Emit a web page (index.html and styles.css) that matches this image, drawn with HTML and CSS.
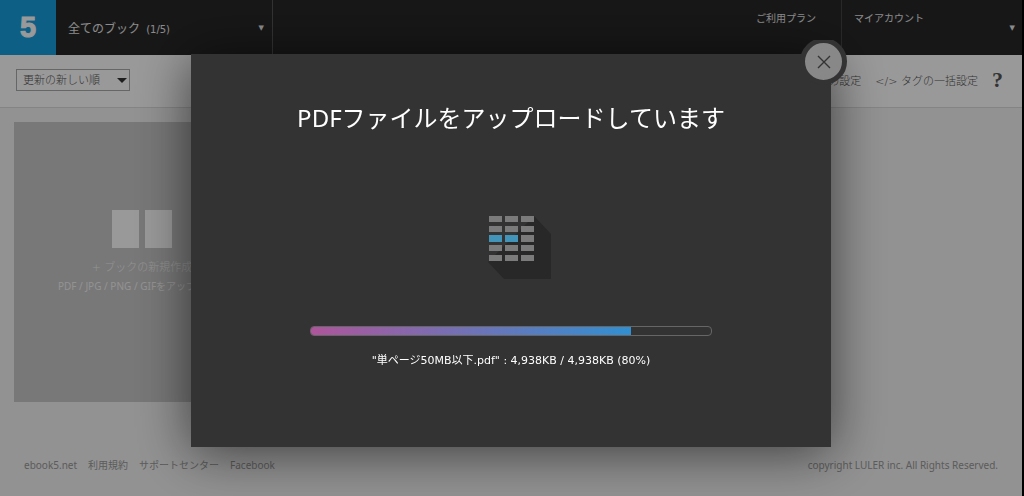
FILE: index.html
```
<!DOCTYPE html>
<html lang="ja">
<head>
    <meta charset="UTF-8" />
    <meta name="viewport" content="width=device-width, initial-scale=1" />
    <title>ebook5</title>
    <link rel="stylesheet" href="styles.css">
</head>
<body>
    <div class="page">
        <header class="header">
            <a class="logo" href="#">5</a>
            <button class="book-menu" type="button">
                <span>全てのブック <small>(1/5)</small></span>
                <span class="arrow">▼</span>
            </button>
            <nav class="account">
                <a class="plan" href="#">ご利用プラン</a>
                <button class="account-menu" type="button">
                    <span>マイアカウント</span>
                    <span class="arrow">▼</span>
                </button>
            </nav>
        </header>

        <div class="toolbar">
            <div class="sort">
                <select aria-label="並び順">
                    <option>更新の新しい順</option>
                    <option>更新の古い順</option>
                </select>
            </div>
            <div class="tools">
                <a href="#">の設定</a>
                <a href="#">&lt;/&gt; タグの一括設定</a>
                <a class="help" href="#">?</a>
            </div>
        </div>

        <main class="books">
            <button class="new-book" type="button">
                <span class="pages"><i></i><i></i></span>
                <span class="new-title">+ ブックの新規作成</span>
                <span class="new-note">PDF / JPG / PNG / GIFをアップロード</span>
            </button>
        </main>

        <footer class="footer">
            <nav class="links">
                <a href="#">ebook5.net</a>
                <a href="#">利用規約</a>
                <a href="#">サポートセンター</a>
                <a href="#">Facebook</a>
            </nav>
            <span>copyright LULER inc. All Rights Reserved.</span>
        </footer>
    </div>

    <div class="overlay">
        <div class="modal" role="dialog" aria-labelledby="modal-title">
            <button class="close" type="button" aria-label="閉じる">
                <svg width="14" height="14" viewBox="0 0 14 14"><path d="M1 1L13 13M13 1L1 13" stroke="#333" stroke-width="1.4"/></svg>
            </button>
            <h1 id="modal-title">PDFファイルをアップロードしています</h1>
            <svg class="loader" width="46" height="64" viewBox="0 0 46 64">
                <path d="M46 0L63 18V63H16L0 46Z" fill="#282828"/>
                <g fill="#7b7b7b">
                    <path d="M1 0h13v6H1zM17 0h13v6H17zM33 0h13v6H33z"/>
                    <path d="M1 10h13v6H1zM17 10h13v6H17zM33 10h13v6H33z"/>
                    <path d="M33 19h13v7H33z"/>
                    <path d="M1 29h13v6H1zM17 29h13v6H17zM33 29h13v6H33z"/>
                    <path d="M1 39h13v6H1zM17 39h13v6H17zM33 39h13v6H33z"/>
                </g>
                <path d="M1 19h13v7H1zM17 19h13v7H17z" fill="#4295b9"/>
            </svg>
            <div class="progress" role="progressbar" aria-label="アップロード" aria-valuenow="80" aria-valuemin="0" aria-valuemax="100">
                <div class="bar" style="width: 80%"></div>
            </div>
            <p class="status">"単ページ50MB以下.pdf" : 4,938KB / 4,938KB (80%)</p>
        </div>
    </div>
</body>
</html>
```

FILE: styles.css
```
* {
    box-sizing: border-box;
}
body {
    margin: 0;
    font-family: "Noto Sans", "Noto Sans CJK JP", sans-serif;
    font-size: 11px;
    background-color: #f3f3f3;
}
a {
    color: inherit;
    text-decoration: none;
}
button {
    font: inherit;
    color: inherit;
    border: none;
    padding: 0;
    background: none;
    cursor: pointer;
}
.page {
    display: flex;
    flex-direction: column;
    min-height: 100vh;
    border-right: 2px solid #000;
}
.header {
    display: flex;
    height: 55px;
    background-color: #272727;
    color: #e8e8e8;
}
.logo {
    width: 56px;
    line-height: 55px;
    background-color: #169fde;
    color: #fff;
    font-family: "Liberation Sans", Arial, sans-serif;
    font-size: 29px;
    font-weight: bold;
    text-align: center;
    -webkit-text-stroke: 1px #fff;
}
.book-menu {
    display: flex;
    justify-content: space-between;
    align-items: center;
    width: 217px;
    padding: 0 8px 0 12px;
    border-right: 1px solid #555;
    font-size: 12px;
}
.book-menu small {
    margin-left: 3px;
    font-family: "DejaVu Sans", sans-serif;
    font-size: 10px;
}
.arrow {
    font-family: "DejaVu Sans", sans-serif;
    font-size: 7px;
}
.account {
    display: flex;
    margin-left: auto;
    font-size: 10px;
    line-height: 16px;
}
.plan {
    width: 85px;
    padding-top: 10px;
}
.account-menu {
    display: flex;
    justify-content: space-between;
    align-items: flex-start;
    width: 181px;
    padding: 10px 7px 0 12px;
    border-left: 1px solid #444;
}
.account-menu .arrow {
    padding-top: 10px;
}
.toolbar {
    display: flex;
    justify-content: space-between;
    align-items: center;
    height: 53px;
    padding: 0 19px 2px 16px;
    background-color: #fff;
    border-bottom: 1px solid #ddd;
    color: #555;
    font-family: "DejaVu Sans", "Noto Sans CJK JP", sans-serif;
    font-weight: 300;
}
.sort {
    position: relative;
}
.sort::after {
    content: "";
    position: absolute;
    top: 9px;
    right: 3px;
    border: 5px solid transparent;
    border-top-color: #333;
    border-bottom: none;
    pointer-events: none;
}
.sort select {
    appearance: none;
    width: 114px;
    height: 22px;
    padding: 0 6px;
    border: 1px solid #aaa;
    border-radius: 0;
    background-color: #fff;
    color: #555;
    font: inherit;
}
.tools {
    display: flex;
    align-items: center;
    gap: 14px;
}
.help {
    font-family: "Liberation Serif", serif;
    font-size: 22px;
    font-weight: bold;
}
.books {
    flex: 1;
    padding: 14px;
}
.new-book {
    display: flex;
    flex-direction: column;
    align-items: center;
    width: 256px;
    height: 280px;
    padding-top: 88px;
    background-color: #c8c8c8;
    color: #f4f4f4;
}
.pages {
    display: flex;
    gap: 6px;
    margin-bottom: 11px;
}
.pages i {
    width: 27px;
    height: 38px;
    background-color: #fff;
}
.new-title {
    font-family: "DejaVu Sans", "Noto Sans CJK JP", sans-serif;
    font-weight: 300;
    line-height: 18px;
}
.new-note {
    font-size: 10px;
    line-height: 18px;
}
.footer {
    display: flex;
    justify-content: space-between;
    padding: 0 24px 23px;
    color: #999;
    font-size: 10px;
    line-height: 16px;
}
.links {
    display: flex;
    gap: 11px;
}
.overlay {
    position: fixed;
    inset: 0;
    display: flex;
    justify-content: center;
    align-items: flex-start;
    padding: 54px 2px 0 0;
    background-color: rgba(0, 0, 0, 0.4);
}
.modal {
    position: relative;
    display: flex;
    flex-direction: column;
    align-items: center;
    width: 640px;
    padding: 46px 40px 77px;
    background-color: #333;
    color: #fff;
    box-shadow: 0 5px 50px rgba(0, 0, 0, 0.6);
}
.close {
    position: absolute;
    top: -16px;
    right: -16px;
    display: flex;
    justify-content: center;
    align-items: center;
    width: 47px;
    height: 47px;
    border: 5px solid #333;
    border-radius: 50%;
    background-color: #888;
    clip-path: inset(2px 0 0 0);
}
.modal h1 {
    margin: 0 0 80px;
    font-size: 24px;
    font-weight: 400;
    line-height: 36px;
}
.loader {
    margin-bottom: 46px;
    overflow: visible;
}
.progress {
    width: 402px;
    max-width: 100%;
    height: 10px;
    border: 1px solid #666;
    border-radius: 4px;
    overflow: hidden;
}
.bar {
    height: 100%;
    background: linear-gradient(to right, #ae559b, #318fd1);
}
.status {
    margin: 16px 0 0;
    font-family: "DejaVu Sans", "Noto Sans CJK JP", sans-serif;
    line-height: 18px;
}
```
